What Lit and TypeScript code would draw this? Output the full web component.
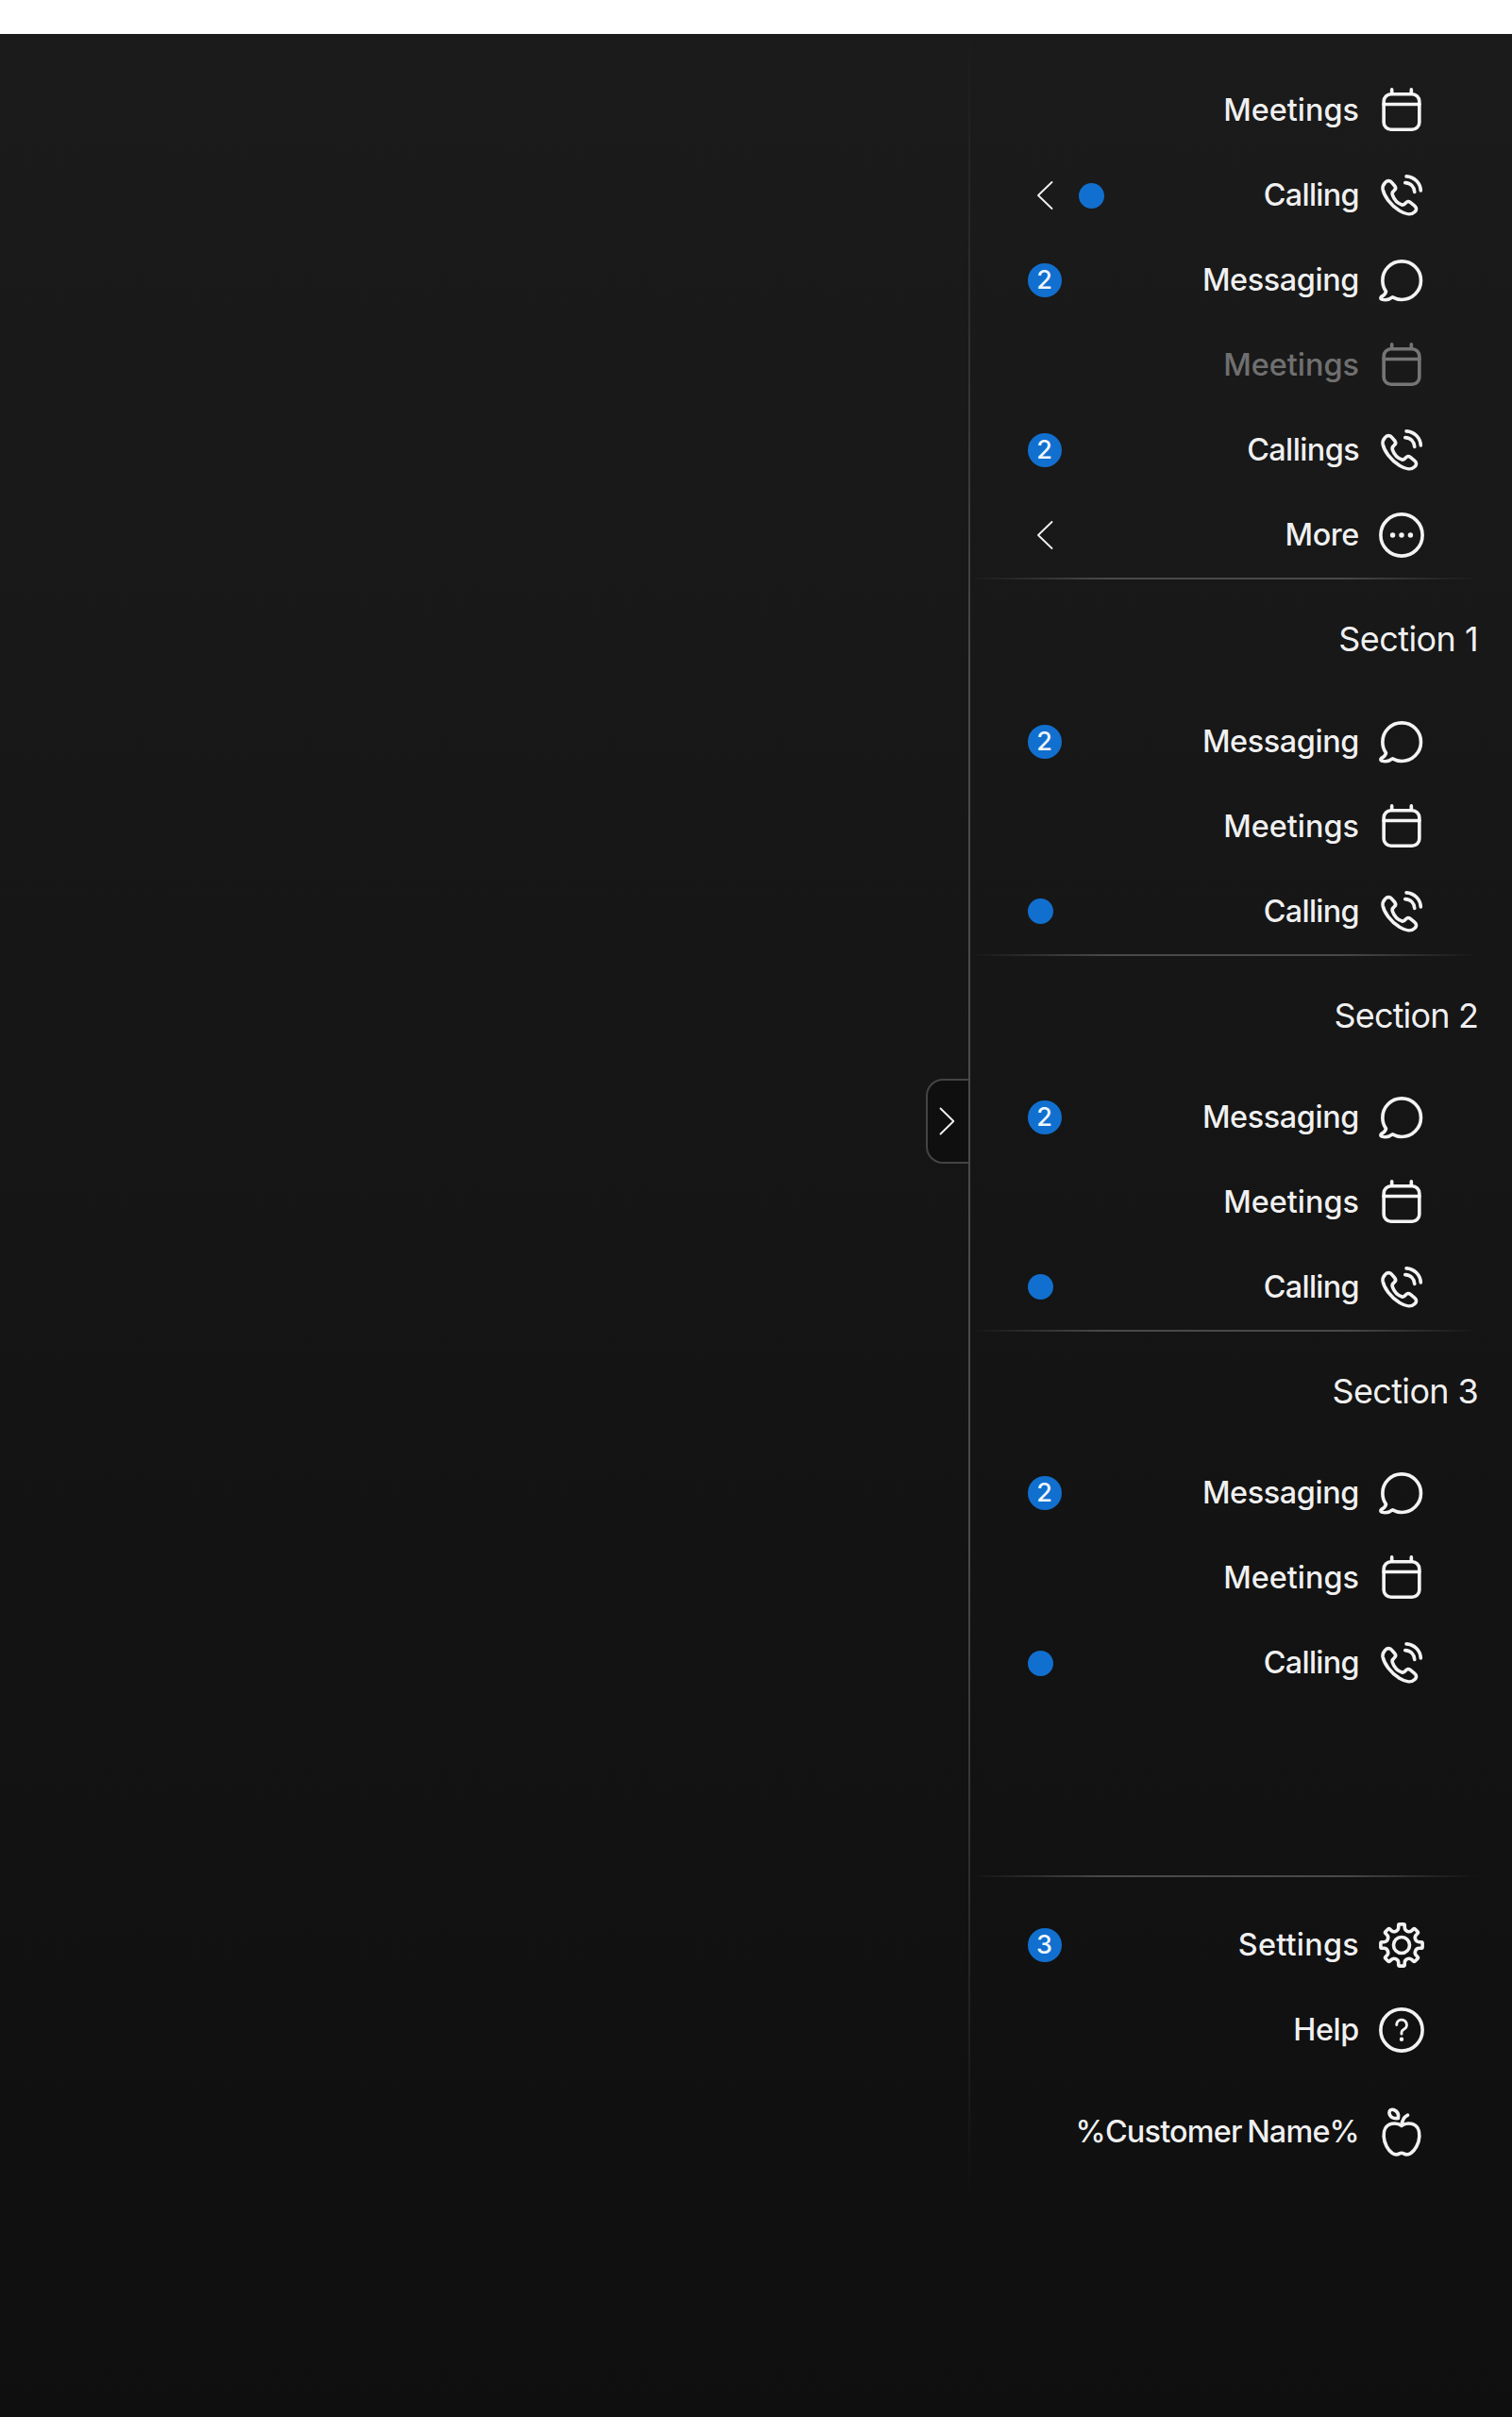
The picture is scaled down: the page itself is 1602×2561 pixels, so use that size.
import { LitElement, html, css, svg, nothing } from "lit";
import { customElement, property } from "lit/decorators.js";

/* Outline of an eight-toothed gear centred on (16, 16). */
const gearPath = (): string => {
  const at = (x: number, y: number, turn: number) => {
    const a = (turn * Math.PI) / 4;
    const px = 16 + x * Math.cos(a) - y * Math.sin(a);
    const py = 16 + x * Math.sin(a) + y * Math.cos(a);
    return `${px.toFixed(2)} ${py.toFixed(2)}`;
  };
  let d = "";
  for (let i = 0; i < 8; i++) {
    d += `${i ? "L" : "M"}${at(-1.8, -10.2, i)}L${at(-1.8, -11.5, i)}Q${at(-1.8, -12.2, i)} ${at(-1.1, -12.2, i)}`;
    d += `L${at(1.1, -12.2, i)}Q${at(1.8, -12.2, i)} ${at(1.8, -11.5, i)}L${at(1.8, -10.2, i)}`;
    d += `C${at(1.9, -8.2, i)} ${at(-1.9, -8.2, i + 1)} ${at(-1.8, -10.2, i + 1)}`;
  }
  return d + "Z";
};

const icons: Record<string, unknown> = {
  meetings: svg`<rect x="5.6" y="6.5" width="20.8" height="20.7" rx="4.2"/><path d="M5.6 12.4H26.4M10.3 6V3.8M21.7 6V3.8"/>`,
  calling: svg`<path d="M6.3 8.7C7.4 7.2 9.3 7.1 10.4 8.6L12.1 10.6C12.9 11.7 12.6 12.4 11.6 13.2C10.5 14 10.3 14.7 10.7 15.8C11.6 18.4 13.7 20.7 16.3 21.5C17.3 21.8 17.8 21.3 18.5 20.4C19.3 19.4 20.1 19.3 21.1 20.1L23.6 22.1C25 23.3 24.8 24.6 23.7 25.7C21.9 27.5 18.5 27.3 14.8 25C9.5 21.5 5.8 16.5 5 12.3C4.8 10.9 5.3 9.8 6.3 8.7Z"/><path d="M18.8 4.9C23.4 5.1 27 8.8 27.2 13.2M18.1 8.6C21.3 8.8 23.4 11 23.6 14"/>`,
  messaging: svg`<path d="M6.9 22.5C5.6 20.7 4.9 18.5 4.9 16.1A11.2 11.2 0 1 1 16.1 27.3C14.1 27.3 12.3 26.8 10.7 25.9C9.2 27.1 6.6 27.8 4.4 27.1C3.7 26.8 3.6 26.1 4.2 25.6C5.5 24.9 6.6 23.9 6.9 22.5Z"/>`,
  more: svg`<circle cx="16" cy="16" r="12.2"/><g class="solid"><circle cx="10.8" cy="16" r="1.5"/><circle cx="16" cy="16" r="1.5"/><circle cx="21.2" cy="16" r="1.5"/></g>`,
  settings: svg`<path d=${gearPath()}/><circle cx="16" cy="16" r="4.7"/>`,
  help: svg`<circle cx="16" cy="16" r="12.2"/><path class="thin" d="M13.1 13A2.95 2.95 0 1 1 17.3 15.6C16.4 16.1 16 16.5 16 17.3V18.3"/><circle class="solid" cx="16" cy="21.4" r="1.2"/>`,
  apple: svg`<path d="M16 12.4C14.4 11 12.2 10.8 10.2 11.2C6.9 11.9 5.4 15 5.6 18.6C5.8 22.8 8.2 26.7 10.6 28.4C12.1 29.4 13.6 29.3 14.8 28.6C15.7 28.1 16.3 28.1 17.2 28.6C18.4 29.3 19.9 29.4 21.4 28.4C23.8 26.7 26.2 22.8 26.4 18.6C26.6 15 25.1 11.9 21.8 11.2C19.8 10.8 17.6 11 16 12.4ZM16 12.4C16.2 9.4 17.4 7.3 19.6 6.2"/><path d="M14 8C11 8.4 9 7.1 8.8 4.8C8.8 3.4 10 2.6 11.4 3C13.5 3.8 14.5 5.7 14 8Z"/>`,
};

interface Item {
  label: string;
  icon: string;
  count?: number;
  dot?: boolean;
  arrow?: boolean;
  disabled?: boolean;
}

/* Letter spacing of each label, in pixels. */
const tracking: Record<string, number> = {
  Calling: -0.7,
  Callings: -0.6,
  Messaging: -0.4,
  More: -0.4,
  Settings: 0.25,
  Help: -0.4,
  "%Customer Name%": -0.8,
  "Section 1": -0.55,
  "Section 2": -0.85,
  "Section 3": -0.65,
};
const spacing = (label: string) => `letter-spacing:${tracking[label] ?? 0}px`;

const top: Item[] = [
  { label: "Meetings", icon: "meetings" },
  { label: "Calling", icon: "calling", dot: true, arrow: true },
  { label: "Messaging", icon: "messaging", count: 2 },
  { label: "Meetings", icon: "meetings", disabled: true },
  { label: "Callings", icon: "calling", count: 2 },
  { label: "More", icon: "more", arrow: true },
];

const section: Item[] = [
  { label: "Messaging", icon: "messaging", count: 2 },
  { label: "Meetings", icon: "meetings" },
  { label: "Calling", icon: "calling", dot: true },
];

@customElement("nav-item")
class NavItem extends LitElement {
  @property({ attribute: false }) item!: Item;

  static styles = css`
    :host { display: block; }
    .row {
      display: flex;
      align-items: center;
      height: 90px;
      padding: 0 88px 0 61px;
      box-sizing: border-box;
      color: rgba(255, 255, 255, 0.95);
    }
    .disabled { color: rgba(255, 255, 255, 0.4); }
    .arrow { width: 36px; height: 36px; margin-right: 18px; }
    .arrow path { stroke: currentColor; stroke-width: 1.8; fill: none; stroke-linecap: round; stroke-linejoin: round; }
    .dot { width: 27px; height: 27px; border-radius: 50%; background: #1170cf; }
    .count {
      width: 36px;
      height: 36px;
      border-radius: 50%;
      background: #1170cf;
      text-align: center;
      text-indent: -1px;
      font-size: 27px;
      line-height: 35px;
      font-weight: 500;
    }
    .label {
      flex: 1;
      text-align: right;
      font-size: 32.4px;
      line-height: 44px;
      font-weight: 500;
      word-spacing: -2.5px;
      white-space: nowrap;
    }
    .icon {
      width: 58px;
      height: 58px;
      margin-left: 16px;
      fill: none;
      stroke: currentColor;
      stroke-width: 2;
      stroke-linecap: round;
      stroke-linejoin: round;
    }
    .disabled .icon { color: #757575; }
    .solid { fill: currentColor; stroke: none; }
    .thin { stroke-width: 1.6; }
  `;

  render() {
    const i = this.item;
    return html`<div class="row ${i.disabled ? "disabled" : ""}">
      ${i.arrow ? html`<svg class="arrow" viewBox="0 0 36 36"><path d="M25.5 4L11 18L25.5 32"/></svg>` : nothing}
      ${i.dot ? html`<span class="dot"></span>` : nothing}
      ${i.count ? html`<span class="count">${i.count}</span>` : nothing}
      <span class="label" style=${spacing(i.label)}>${i.label}</span>
      <svg class="icon" viewBox="0 0 32 32">${icons[i.icon]}</svg>
    </div>`;
  }
}

@customElement("app-root")
class AppRoot extends LitElement {
  static styles = css`
    :host {
      display: block;
      font-family: Inter, "Liberation Sans", sans-serif;
      background: #fff;
      padding-top: 36px;
    }
    .stage {
      display: flex;
      justify-content: flex-end;
      height: 2525px;
      background: linear-gradient(#1b1b1b, #0f0f0f);
    }
    .nav { position: relative; display: flex; width: 576px; height: 2295px; }
    .edge {
      width: 2px;
      background: linear-gradient(transparent, #4a4a4a 30%, #4a4a4a 70%, transparent);
    }
    .menu { flex: 1; display: flex; flex-direction: column; padding: 36.3px 0 27px; }
    .toggle {
      position: absolute;
      left: -45px;
      top: 1107px;
      width: 45px;
      height: 90px;
      box-sizing: border-box;
      border: 2px solid #444;
      border-right: 0;
      border-radius: 18px 0 0 18px;
      background: #0f0f0f;
    }
    .toggle svg { display: block; width: 43px; height: 86px; }
    .toggle path { stroke: rgba(255, 255, 255, 0.95); stroke-width: 1.8; fill: none; stroke-linecap: round; stroke-linejoin: round; }
    .divider {
      height: 2px;
      margin-right: 36px;
      background: linear-gradient(90deg, transparent, #4a4a4a 27%, #4a4a4a 73%, transparent);
    }
    .title {
      height: 126.25px;
      line-height: 127px;
      padding-right: 36px;
      text-align: right;
      font-size: 36px;
      font-weight: 400;
      color: rgba(255, 255, 255, 0.95);
      white-space: nowrap;
    }
    .footer { margin-top: auto; }
    .footer .divider { margin-bottom: 27px; }
    .brand { padding-top: 18px; }
  `;

  render() {
    const row = (item: Item) => html`<nav-item .item=${item}></nav-item>`;
    const title = (text: string) => html`<div class="title" style=${spacing(text)}>${text}</div>`;
    return html`<div class="stage">
      <nav class="nav">
        <div class="toggle"><svg viewBox="0 0 43 86"><path d="M13.5 29.5L27.3 43L13.5 56.5"/></svg></div>
        <div class="edge"></div>
        <div class="menu">
          ${top.map(row)}
          ${[1, 2, 3].map((n) => html`<div class="divider"></div>${title(`Section ${n}`)}${section.map(row)}`)}
          <div class="footer">
            <div class="divider"></div>
            ${row({ label: "Settings", icon: "settings", count: 3 })}
            ${row({ label: "Help", icon: "help" })}
            <div class="brand">${row({ label: "%Customer Name%", icon: "apple" })}</div>
          </div>
        </div>
      </nav>
    </div>`;
  }
}
